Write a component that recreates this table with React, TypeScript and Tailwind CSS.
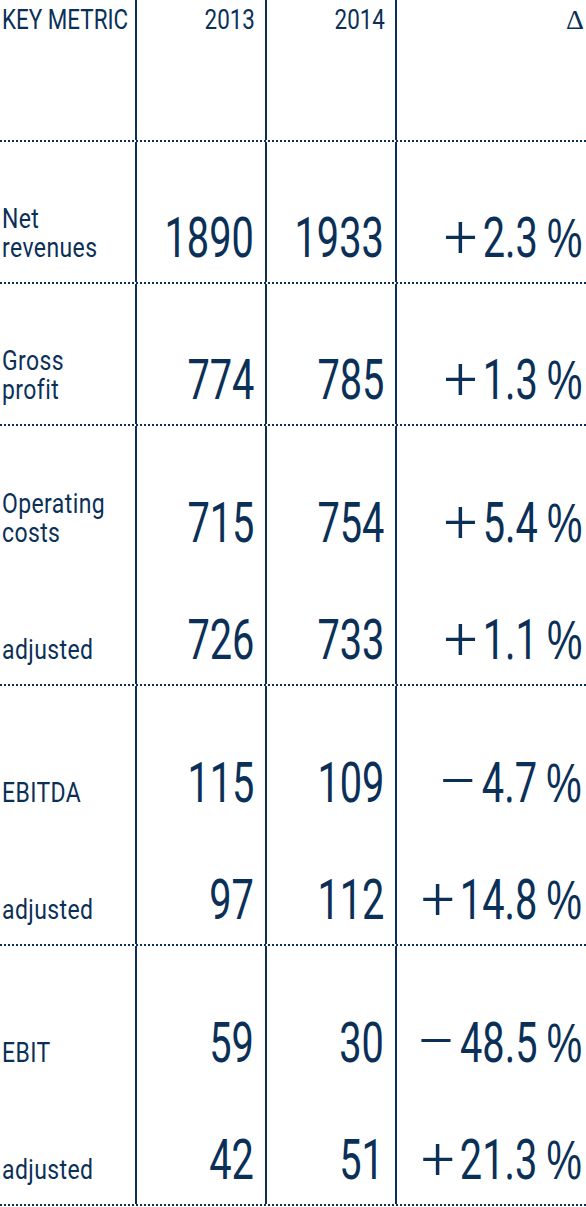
type Item = { label: string[]; a: string; b: string; sign: string; d: string }

const blocks: Item[][] = [
  [{ label: ["Net", "revenues"], a: "1890", b: "1933", sign: "+", d: "2.3" }],
  [{ label: ["Gross", "profit"], a: "774", b: "785", sign: "+", d: "1.3" }],
  [
    { label: ["Operating", "costs"], a: "715", b: "754", sign: "+", d: "5.4" },
    { label: ["adjusted"], a: "726", b: "733", sign: "+", d: "1.1" },
  ],
  [
    { label: ["EBITDA"], a: "115", b: "109", sign: "\u2013", d: "4.7" },
    { label: ["adjusted"], a: "97", b: "112", sign: "+", d: "14.8" },
  ],
  [
    { label: ["EBIT"], a: "59", b: "30", sign: "\u2013", d: "48.5" },
    { label: ["adjusted"], a: "42", b: "51", sign: "+", d: "21.3" },
  ],
]

type Kind = "single" | "first" | "last"

const heights: Record<Kind, string> = { single: "h-[140px]", first: "h-[125px]", last: "h-[133px]" }
const numPad: Record<Kind, string> = { single: "pb-[16px]", first: "pb-0", last: "pb-[16px]" }
const labelPad: Record<Kind, string> = { single: "pb-[20px]", first: "pb-[4px]", last: "pb-[20px]" }

const Num = ({ value }: { value: string }) => (
  <span className="inline-block origin-right scale-x-[0.71] whitespace-nowrap text-[56px] leading-[56px]">
    {value}
  </span>
)

const Row = ({ item, kind }: { item: Item; kind: Kind }) => (
  <div className={`grid grid-cols-[135px_130px_130px_minmax(0,1fr)] ${heights[kind]}`}>
    <div className={`flex min-w-0 flex-col justify-end pl-[2px] ${labelPad[kind]}`}>
      {item.label.map((line) => (
        <div
          key={line}
          className="origin-left scale-x-[0.82] whitespace-nowrap text-[28px] leading-[29px] tracking-[0.5px]"
        >
          {line}
        </div>
      ))}
    </div>
    <div className={`flex min-w-0 flex-col items-end justify-end border-l-2 border-[#0b3058] pr-[11px] ${numPad[kind]}`}>
      <Num value={item.a} />
    </div>
    <div className={`flex min-w-0 flex-col items-end justify-end border-l-2 border-[#0b3058] pr-[11px] ${numPad[kind]}`}>
      <Num value={item.b} />
    </div>
    <div className={`flex min-w-0 flex-col items-end justify-end border-l-2 border-[#0b3058] pr-[4px] ${numPad[kind]}`}>
      <span className="inline-block shrink-0 origin-right scale-x-[0.71] whitespace-nowrap text-[56px] leading-[56px]">
        <span className="mr-[14px] inline-block scale-x-[1.4] text-[60px] font-light">{item.sign}</span>
        {item.d}
        <span className="ml-[13px] font-['Liberation_Sans',sans-serif]">%</span>
      </span>
    </div>
  </div>
)

export default function App() {
  return (
    <div className="w-full overflow-hidden bg-white font-['Roboto',sans-serif] text-[#0b3058]">
      <div className="grid h-[142px] grid-cols-[135px_130px_130px_minmax(0,1fr)] border-b-2 border-dotted border-[#0b3058]">
        <div className="pl-[2px] pt-[5px]">
          <div className="origin-left scale-x-[0.8] whitespace-nowrap text-[28px] leading-[29px]">KEY METRIC</div>
        </div>
        <div className="flex items-start justify-end border-l-2 border-solid border-[#0b3058] pr-[10px] pt-[5px]">
          <span className="inline-block origin-right scale-x-[0.8] text-[28px] leading-[29px]">2013</span>
        </div>
        <div className="flex items-start justify-end border-l-2 border-solid border-[#0b3058] pr-[10px] pt-[5px]">
          <span className="inline-block origin-right scale-x-[0.8] text-[28px] leading-[29px]">2014</span>
        </div>
        <div className="flex items-start justify-end border-l-2 border-solid border-[#0b3058] pr-[2px] pt-[5px]">
          <span className="font-['Liberation_Serif',serif] text-[28px] leading-[29px]">Δ</span>
        </div>
      </div>

      {blocks.map((group, gi) => (
        <div key={gi} className="border-b-2 border-dotted border-[#0b3058]">
          {group.map((item, i) => (
            <Row
              key={i}
              item={item}
              kind={group.length === 1 ? "single" : i === 0 ? "first" : "last"}
            />
          ))}
        </div>
      ))}
    </div>
  )
}
